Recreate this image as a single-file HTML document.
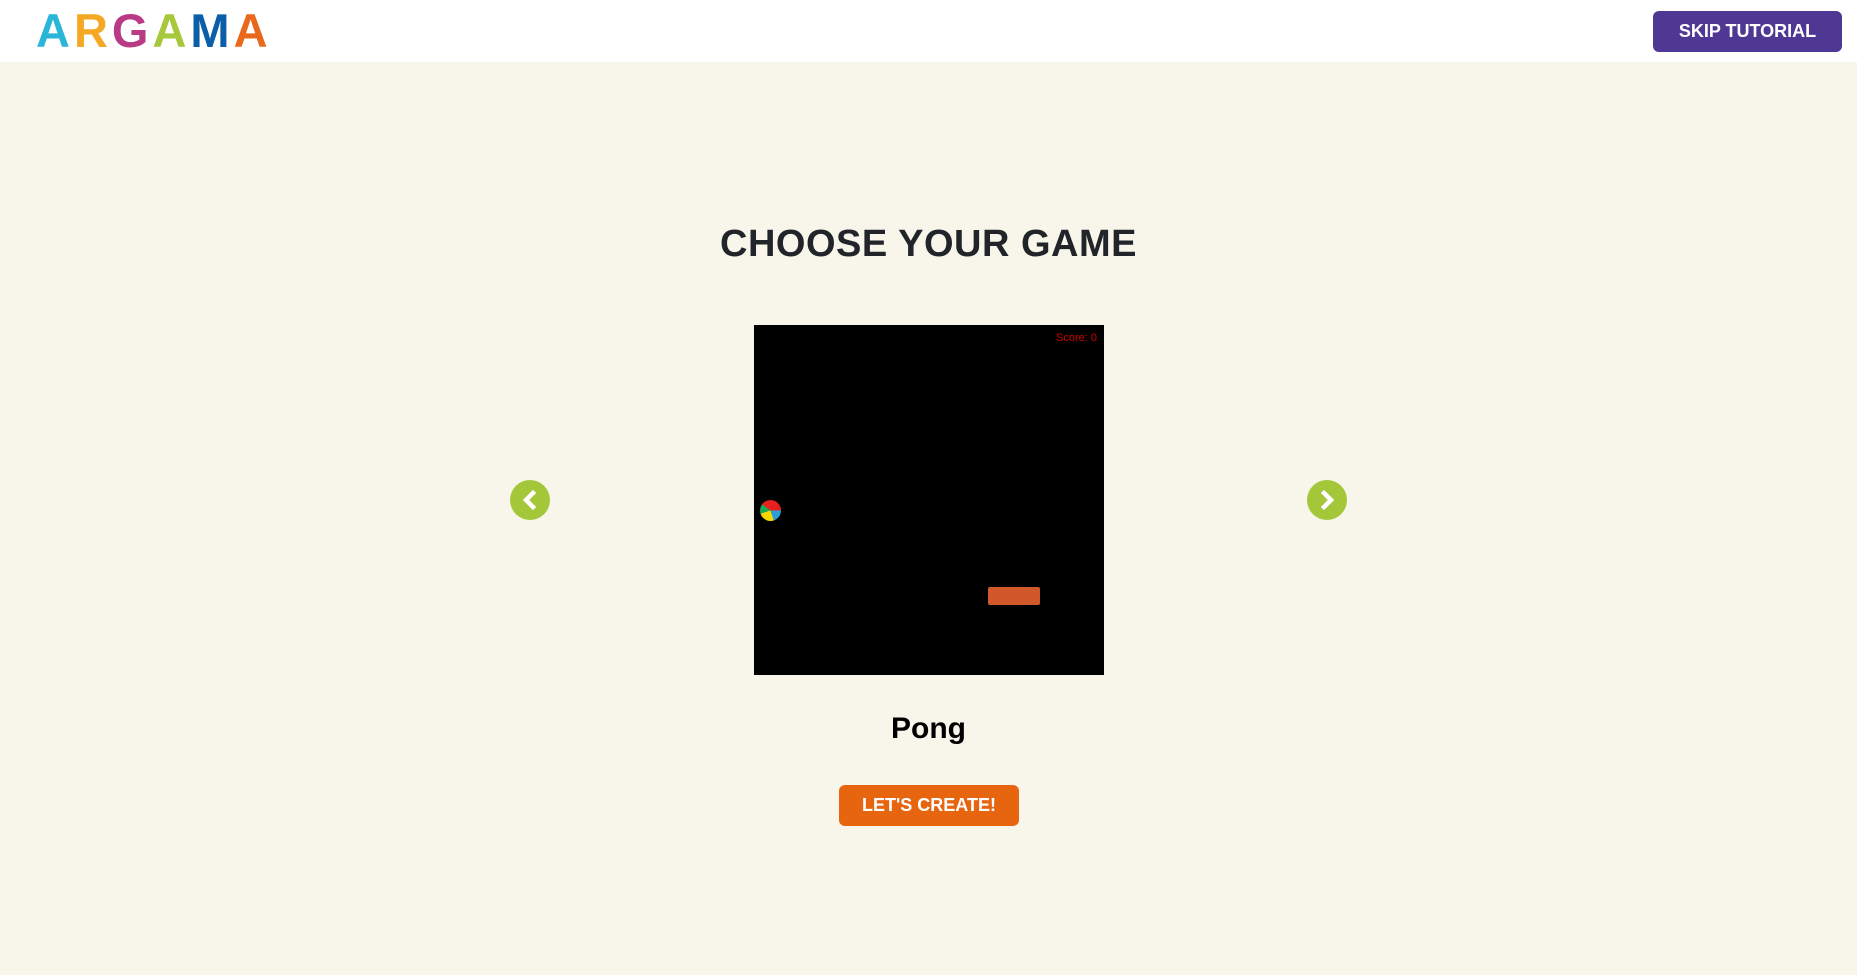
<!DOCTYPE html>
<html><head><meta charset="utf-8"><style>
*{margin:0;padding:0;box-sizing:border-box}
body{width:1857px;height:975px;background:#f8f5ea;font-family:"Liberation Sans",sans-serif;position:relative;overflow:hidden}
.hdr{position:absolute;left:0;top:0;width:1857px;height:62px;background:#fff}
.logo{position:absolute;left:36px;top:3px;font-size:47px;font-weight:bold;letter-spacing:4px;line-height:56px}
.skip{position:absolute;left:1653px;top:11px;width:189px;height:41px;background:#4f3894;border-radius:6px;color:#fff;font-weight:bold;font-size:18px;text-align:center;line-height:41px}
.title{position:absolute;left:0;width:1857px;top:222px;text-align:center;font-size:38px;font-weight:bold;color:#212529;line-height:44px;letter-spacing:0.5px}
.game{position:absolute;left:754px;top:325px;width:350px;height:350px;background:#000}
.score{position:absolute;right:7px;top:7px;color:#d00000;font-size:11px}
.ball{position:absolute;left:6px;top:175px;width:21px;height:21px;border-radius:50%;background:conic-gradient(#e52020 0 25%,#2a9fd8 25% 45%,#f5d800 45% 70%,#1aaa55 70% 85%,#e52020 85%)}
.pad{position:absolute;left:234px;top:262px;width:52px;height:18px;background:#d0582a;border-radius:2px}
.arr{position:absolute;top:480px;width:40px;height:40px;border-radius:50%;background:#a4c739}
.pong{position:absolute;left:0;width:1857px;top:711px;text-align:center;font-size:30px;font-weight:bold;color:#000;line-height:36px}
.btn{position:absolute;left:839px;top:785px;width:180px;height:41px;background:#e7650f;border-radius:6px;color:#fff;font-weight:bold;font-size:18px;text-align:center;line-height:41px}
</style></head><body>
<div class="hdr"><div class="logo"><span style="color:#2ab6d9">A</span><span style="color:#f5a823">R</span><span style="color:#b93b85">G</span><span style="color:#a6c83a">A</span><span style="color:#0b5ea8">M</span><span style="color:#e8691b">A</span></div>
<div class="skip">SKIP TUTORIAL</div></div>
<div class="title">CHOOSE YOUR GAME</div>
<div class="arr" style="left:510px"><svg width="40" height="40"><path d="M23 13 L16 20 L23 27" stroke="#fff" stroke-width="4.5" fill="none" stroke-linecap="square"/></svg></div>
<div class="game"><div class="score">Score: 0</div><div class="ball"></div><div class="pad"></div></div>
<div class="arr" style="left:1307px"><svg width="40" height="40"><path d="M17 13 L24 20 L17 27" stroke="#fff" stroke-width="4.5" fill="none" stroke-linecap="square"/></svg></div>
<div class="pong">Pong</div>
<div class="btn">LET'S CREATE!</div>
</body></html>
